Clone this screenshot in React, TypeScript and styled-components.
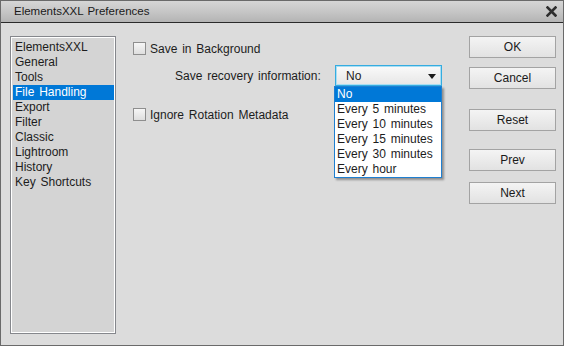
import React from 'react';
import styled, { createGlobalStyle } from 'styled-components';

const categories = [
  'ElementsXXL',
  'General',
  'Tools',
  'File Handling',
  'Export',
  'Filter',
  'Classic',
  'Lightroom',
  'History',
  'Key Shortcuts',
];

const intervals = [
  'No',
  'Every 5 minutes',
  'Every 10 minutes',
  'Every 15 minutes',
  'Every 30 minutes',
  'Every hour',
];

function CloseIcon() {
  return (
    <svg width="11" height="11" viewBox="0 0 11 11">
      <path d="M1.5 1.5 L9.5 9.5 M9.5 1.5 L1.5 9.5" stroke="#2e2e2e" strokeWidth="2.6" strokeLinecap="square" />
    </svg>
  );
}

function Preferences() {
  return (
    <Window>
      <GlobalStyle />
      <TitleBar>
        <Title>ElementsXXL Preferences</Title>
        <CloseButton>
          <CloseIcon />
        </CloseButton>
      </TitleBar>
      <Body>
        <CategoryList>
          {categories.map((c) => (
            <CategoryItem key={c} $selected={c === 'File Handling'}>
              {c}
            </CategoryItem>
          ))}
        </CategoryList>
        <Panel>
          <CheckRow>
            <CheckBox />
            <CheckLabel>Save in Background</CheckLabel>
          </CheckRow>
          <RecoveryRow>
            <RecoveryLabel>Save recovery information:</RecoveryLabel>
            <Select>
              <SelectBox>
                <span>No</span>
                <Arrow />
              </SelectBox>
              <DropList>
                {intervals.map((i) => (
                  <DropItem key={i} $active={i === 'No'}>
                    {i}
                  </DropItem>
                ))}
              </DropList>
            </Select>
          </RecoveryRow>
          <CheckRow $gap={22}>
            <CheckBox />
            <CheckLabel>Ignore Rotation Metadata</CheckLabel>
          </CheckRow>
        </Panel>
        <Buttons>
          <Button $top={0}>OK</Button>
          <Button $top={9}>Cancel</Button>
          <Button $top={20}>Reset</Button>
          <Button $top={18}>Prev</Button>
          <Button $top={11}>Next</Button>
        </Buttons>
      </Body>
    </Window>
  );
}

export default Preferences;

const GlobalStyle = createGlobalStyle`
  html, body {
    margin: 0;
    padding: 0;
    background: #dcdcdc;
  }
  * {
    box-sizing: border-box;
  }
`;

const Window = styled.div`
  width: 564px;
  height: 346px;
  border: 1px solid #6a6a6a;
  background: #dcdcdc;
  display: flex;
  flex-direction: column;
  font-family: 'Liberation Sans', Arial, sans-serif;
  font-size: 12px;
  word-spacing: 1.5px;
  color: #1c1c1c;
  overflow: hidden;
`;

const TitleBar = styled.div`
  height: 22px;
  flex: 0 0 22px;
  display: flex;
  align-items: center;
  justify-content: space-between;
  padding: 0 6px 1px 13px;
  background: linear-gradient(#d6d6d6, #c6c6c6 50%, #b4b4b4);
  border-bottom: 1px solid #2a2a2a;
`;

const Title = styled.div`
  font-size: 11.5px;
  color: #1a1a1a;
  word-spacing: 1px;
`;

const CloseButton = styled.div`
  width: 12px;
  height: 12px;
  display: flex;
  align-items: center;
  justify-content: center;
`;

const Body = styled.div`
  flex: 1;
  display: flex;
  padding: 13px 7px 0 9px;
`;

const CategoryList = styled.div`
  width: 106px;
  height: 298px;
  flex: 0 0 106px;
  border: 1px solid #85878c;
  box-shadow: inset 0 0 0 1px #ffffff;
  background: #d4d4d4;
  padding: 3px 1px 0 2px;
`;

const CategoryItem = styled.div<{ $selected?: boolean }>`
  height: 15px;
  line-height: 15px;
  padding-left: 2px;
  white-space: nowrap;
  background: ${(p) => (p.$selected ? '#0078d7' : 'transparent')};
  color: ${(p) => (p.$selected ? '#ffffff' : '#1c1c1c')};
`;

const Panel = styled.div`
  flex: 1;
  padding: 6px 0 0 17px;
  display: flex;
  flex-direction: column;
`;

const CheckRow = styled.div<{ $gap?: number }>`
  display: flex;
  align-items: center;
  height: 13px;
  margin-top: ${(p) => p.$gap ?? 0}px;
`;

const CheckBox = styled.div`
  width: 13px;
  height: 13px;
  flex: 0 0 13px;
  border: 1px solid #8e8e8e;
  background: linear-gradient(#f6f6f6, #dedede);
`;

const CheckLabel = styled.span`
  margin-left: 4px;
  white-space: nowrap;
`;

const RecoveryRow = styled.div`
  display: flex;
  align-items: center;
  height: 21px;
  margin-top: 10px;
`;

const RecoveryLabel = styled.span`
  flex: 0 0 202px;
  padding-left: 42px;
  white-space: nowrap;
`;

const Select = styled.div`
  position: relative;
  width: 107px;
  height: 21px;
`;

const SelectBox = styled.div`
  height: 21px;
  border: 1px solid #35ace0;
  box-shadow: inset 0 0 0 1px #a9def3;
  background: linear-gradient(#fafafa, #e6e6e6);
  display: flex;
  align-items: center;
  justify-content: space-between;
  padding: 1px 5px 0 10px;
`;

const Arrow = styled.span`
  width: 0;
  height: 0;
  border-left: 4px solid transparent;
  border-right: 4px solid transparent;
  border-top: 5px solid #1a1a1a;
`;

const DropList = styled.div`
  position: absolute;
  top: 21px;
  left: -1px;
  width: 108px;
  background: #ffffff;
  border: 1px solid #1f7fd0;
  box-shadow: 2px 2px 2px rgba(0, 0, 0, 0.35);
  z-index: 2;
`;

const DropItem = styled.div<{ $active?: boolean }>`
  height: 15px;
  line-height: 15px;
  padding-left: 2px;
  white-space: nowrap;
  background: ${(p) => (p.$active ? '#0078d7' : '#ffffff')};
  color: ${(p) => (p.$active ? '#ffffff' : '#1c1c1c')};
`;

const Buttons = styled.div`
  flex: 0 0 87px;
  display: flex;
  flex-direction: column;
`;

const Button = styled.div<{ $top: number }>`
  height: 22px;
  margin-top: ${(p) => p.$top}px;
  border: 1px solid #a3a3a3;
  background: linear-gradient(#f4f4f4, #e2e2e2);
  display: flex;
  align-items: center;
  justify-content: center;
  color: #1a1a1a;
`;
